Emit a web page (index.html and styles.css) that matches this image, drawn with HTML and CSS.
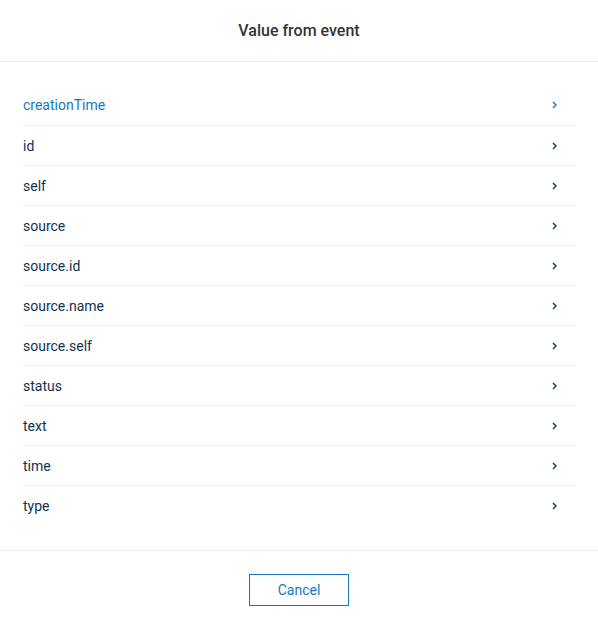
FILE: index.html
```html
<!DOCTYPE html>
<html>
<head>
<meta charset="utf-8">
<link rel="stylesheet" href="styles.css">
</head>
<body>
<div class="modal">
  <div class="header"><h1 class="title">Value from event</h1></div>
  <div class="body">
    <ul class="list">
      <li class="row active"><span>creationTime</span><svg class="chev" viewBox="0 0 5 8"><path d="M1 1 L4 4 L1 7" fill="none" stroke="currentColor" stroke-width="1.4"/></svg></li>
      <li class="row"><span>id</span><svg class="chev" viewBox="0 0 5 8"><path d="M1 1 L4 4 L1 7" fill="none" stroke="currentColor" stroke-width="1.4"/></svg></li>
      <li class="row"><span>self</span><svg class="chev" viewBox="0 0 5 8"><path d="M1 1 L4 4 L1 7" fill="none" stroke="currentColor" stroke-width="1.4"/></svg></li>
      <li class="row"><span>source</span><svg class="chev" viewBox="0 0 5 8"><path d="M1 1 L4 4 L1 7" fill="none" stroke="currentColor" stroke-width="1.4"/></svg></li>
      <li class="row"><span>source.id</span><svg class="chev" viewBox="0 0 5 8"><path d="M1 1 L4 4 L1 7" fill="none" stroke="currentColor" stroke-width="1.4"/></svg></li>
      <li class="row"><span>source.name</span><svg class="chev" viewBox="0 0 5 8"><path d="M1 1 L4 4 L1 7" fill="none" stroke="currentColor" stroke-width="1.4"/></svg></li>
      <li class="row"><span>source.self</span><svg class="chev" viewBox="0 0 5 8"><path d="M1 1 L4 4 L1 7" fill="none" stroke="currentColor" stroke-width="1.4"/></svg></li>
      <li class="row"><span>status</span><svg class="chev" viewBox="0 0 5 8"><path d="M1 1 L4 4 L1 7" fill="none" stroke="currentColor" stroke-width="1.4"/></svg></li>
      <li class="row"><span>text</span><svg class="chev" viewBox="0 0 5 8"><path d="M1 1 L4 4 L1 7" fill="none" stroke="currentColor" stroke-width="1.4"/></svg></li>
      <li class="row"><span>time</span><svg class="chev" viewBox="0 0 5 8"><path d="M1 1 L4 4 L1 7" fill="none" stroke="currentColor" stroke-width="1.4"/></svg></li>
      <li class="row"><span>type</span><svg class="chev" viewBox="0 0 5 8"><path d="M1 1 L4 4 L1 7" fill="none" stroke="currentColor" stroke-width="1.4"/></svg></li>
    </ul>
  </div>
  <div class="footer"><button class="btn">Cancel</button></div>
</div>
</body>
</html>
```
FILE: styles.css
```css
html, body {
  margin: 0;
  padding: 0;
  background: #fff;
}
.modal {
  width: 598px;
  height: 629px;
  font-family: Roboto, "Liberation Sans", sans-serif;
  display: flex;
  flex-direction: column;
}
.header {
  height: 62px;
  border-bottom: 1px solid #ebebeb;
  display: flex;
  align-items: center;
  justify-content: center;
  box-sizing: border-box;
}
.title {
  margin: 0;
  font-size: 16px;
  font-weight: 500;
  color: #333;
}
.body {
  padding: 23px 23px 25px 23px;
  border-bottom: 1px solid #ebebeb;
}
.list {
  list-style: none;
  margin: 0;
  padding: 0;
}
.row {
  height: 40px;
  display: flex;
  align-items: center;
  justify-content: space-between;
  font-size: 14px;
  color: #0f3352;
  border-top: 1px solid #eeeeee;
  box-sizing: border-box;
  padding-right: 18px;
}
.row:first-child {
  border-top: none;
}
.row.active {
  color: #1776bf;
}
.chev {
  width: 5px;
  height: 8px;
}
.footer {
  display: flex;
  justify-content: center;
  padding-top: 23px;
}
.btn {
  width: 100px;
  height: 32px;
  border: 1px solid #1776bf;
  background: #fff;
  color: #1776bf;
  font-family: Roboto, "Liberation Sans", sans-serif;
  font-size: 14px;
  border-radius: 0;
  padding: 0;
}
```
